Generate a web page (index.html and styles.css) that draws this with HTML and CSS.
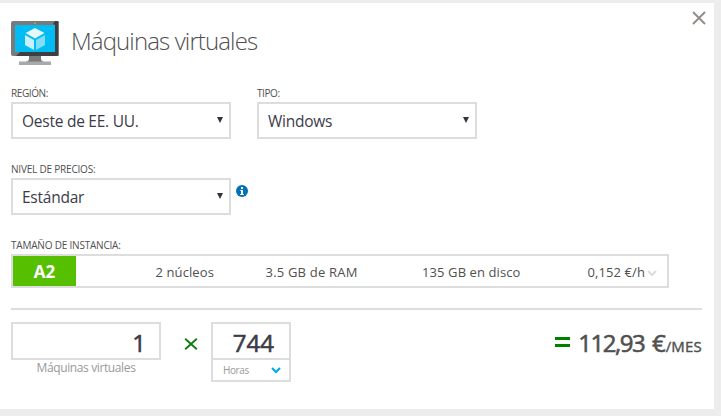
FILE: index.html
```html
<!DOCTYPE html>
<html lang="es">
<head>
<meta charset="utf-8">
<title>Máquinas virtuales</title>
<link rel="stylesheet" href="styles.css">
</head>
<body>
<main class="panel">
  <header class="header">
    <svg class="monitor" width="48" height="44" viewBox="0 0 48 44">
      <path d="M18 34h12v4q0 2 3 3H15q3-1 3-3z" fill="#7a7a7a"/>
      <path d="M8 40.500h32V44H8z" fill="#a7a9ab"/>
      <rect width="48" height="35" rx="2" fill="#7a7a7a"/>
      <path d="M46 0q2 0 2 2v31q0 2-2 2H5l4-4h35V4l-2-1 2-3z" fill="#3e3f41"/>
      <path d="M47 1q1 0 1 1v31q0 1-1 1z" fill="#77787a"/>
      <path d="M4 4h40v27H4z" fill="#00bcf2"/>
      <circle cx="24" cy="2.300" r=".8" fill="#b8d432"/>
      <path d="M24 7l9.500 5L24 17.500 14.500 12z" fill="#e6f8fe"/>
      <path d="M14 14l9 5v10l-9-5z" fill="#c8f0fd"/>
      <path d="M34 14l-9 5v10l9-5z" fill="#80def9"/>
    </svg>
    <h1 class="title">Máquinas virtuales</h1>
    <svg class="close" width="14" height="14" viewBox="0 0 14 14"><path d="M1 1l12 12M13 1L1 13" fill="none" stroke="#948b88" stroke-width="1.900"/></svg>
  </header>

  <section class="fields">
    <div class="field">
      <div class="label">REGIÓN:</div>
      <div class="select"><span>Oeste de EE. UU.</span><i class="arrow"></i></div>
    </div>
    <div class="field">
      <div class="label">TIPO:</div>
      <div class="select"><span>Windows</span><i class="arrow"></i></div>
    </div>
  </section>

  <section class="fields tier">
    <div class="field">
      <div class="label wide">NIVEL DE PRECIOS:</div>
      <div class="select"><span>Estándar</span><i class="arrow"></i></div>
    </div>
    <svg class="info" width="12" height="12" viewBox="0 0 12 12"><circle cx="6" cy="6" r="6" fill="#0072b5"/><path d="M5 2h2v2H5zM4.300 5H7v4h.8v1H4.200V9H5V6h-.7z" fill="#fff"/></svg>
  </section>

  <section class="size">
    <div class="label wide">TAMAÑO DE INSTANCIA:</div>
    <div class="instance">
      <b class="badge">A2</b>
      <span class="cores">2 núcleos</span>
      <span class="ram">3.5 GB de RAM</span>
      <span class="disk">135 GB en disco</span>
      <span class="rate">0,152 €/h</span>
      <svg class="chev" width="10" height="7" viewBox="0 0 10 7"><path d="M1 1l4 4 4-4" fill="none" stroke="#dcdcdc" stroke-width="2"/></svg>
    </div>
  </section>

  <section class="totals">
    <div class="count">
      <div class="number">1</div>
      <div class="caption">Máquinas virtuales</div>
    </div>
    <svg class="times" width="14" height="12" viewBox="0 0 14 12"><path d="M1.200.7l11.600 10.600M12.800.7L1.200 11.300" fill="none" stroke="#107c10" stroke-width="1.900"/></svg>
    <div class="hours">
      <div class="amount">744</div>
      <div class="unit"><span>Horas</span><svg width="10" height="7" viewBox="0 0 10 7"><path d="M1 1l4 4 4-4" fill="none" stroke="#00abec" stroke-width="2.200"/></svg></div>
    </div>
    <div class="price">
      <svg class="equals" width="15" height="10" viewBox="0 0 15 10"><path d="M0 0h15v3H0zM0 7h15v3H0z" fill="#008000"/></svg>
      <span class="sum"><span class="digits">112,93</span> €</span><span class="per">/MES</span>
    </div>
  </section>
</main>
</body>
</html>
```
FILE: styles.css
```css
* { box-sizing: border-box; }
body {
  margin: 0;
  padding-top: 3px;
  height: 416px;
  overflow: hidden;
  background: #ededed;
  color: #505050;
  font-family: "Open Sans", "Noto Sans", sans-serif;
}
svg { display: block; flex: none; }
.panel { width: 714px; height: 406px; background: #fff; padding: 0 12px 0 11px; white-space: nowrap; }
.header { display: flex; height: 83px; margin-right: -4px; }
.monitor { margin-top: 18px; }
.title { margin: 21px 0 0 12px; font-size: 24px; line-height: 34px; font-weight: 300; letter-spacing: -0.88px; }
.close { margin: 8px 0 0 auto; }
.fields { display: flex; gap: 26px; height: 76px; }
.label { font-size: 10px; line-height: 14px; height: 16px; letter-spacing: -0.4px; }
.wide { letter-spacing: -0.2px; }
.select {
  display: flex; justify-content: space-between; align-items: center;
  width: 220px; height: 37px; border: 2px solid #ddd; padding: 0 6px 0 9px;
  font-size: 15.5px; letter-spacing: -0.25px; color: #3c3c48;
}
.arrow { border: solid transparent; border-width: 6px 3.500px 0; border-top-color: #35323f; margin-top: -2px; }
.tier { gap: 5px; }
.info { margin-top: 23px; }
.instance { display: flex; align-items: center; width: 658px; height: 34px; border: 2px solid #ddd; font-size: 13px; line-height: 18px; }
.badge { width: 63px; height: 30px; background: #55bf00; color: #fff; font-size: 17px; line-height: 31px; text-align: center; }
.instance span { margin-top: 2px; letter-spacing: 0.1px; }
.instance .cores { width: 110px; margin-left: 79.5px; }
.instance .ram { width: 156.5px; letter-spacing: 0.2px; }
.disk { width: 165.5px; }
.rate { width: 59.5px; }
.chev { margin-top: 4px; }
.size { height: 53px; }
.totals { display: flex; width: 691px; margin-top: 17px; border-top: 2px solid #ddd; padding-top: 12px; }
.count { width: 150px; }
.number, .amount {
  padding-right: 15px; text-align: right; font-size: 24px; line-height: 38px;
  color: #3c3c48; -webkit-text-stroke: 0.6px #3c3c48;
}
.number { height: 38px; border: 2px solid #ddd; padding-right: 13px; }
.caption { color: #999; font-size: 12px; line-height: 16px; text-align: center; letter-spacing: -0.38px; }
.times { margin: 16px 13px 0 23px; }
.hours { width: 80px; height: 60px; border: 2px solid #ddd; }
.amount { height: 36px; border-bottom: 2px solid #ddd; }
.unit { display: flex; align-items: center; justify-content: space-between; height: 20px; padding: 0 8px 0 10px; font-size: 10px; letter-spacing: -0.4px; color: #999; }
.price { display: flex; align-items: baseline; height: 38px; margin-left: auto; line-height: 42px; -webkit-text-stroke: 0.6px #505050; }
.equals { align-self: flex-start; margin: 15px 8px 0 0; }
.sum { font-size: 24px; }
.digits { letter-spacing: -1.5px; margin-right: 1.5px; }
.per { font-size: 15px; letter-spacing: 0.2px; -webkit-text-stroke-width: 0.4px; }
```
